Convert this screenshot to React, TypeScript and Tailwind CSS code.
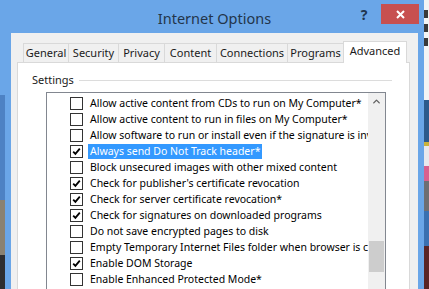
import { ChevronUp } from "lucide-react";

const tabs = [
  { label: "General", w: "w-[45px]" },
  { label: "Security", w: "w-[50px]" },
  { label: "Privacy", w: "w-[46px]" },
  { label: "Content", w: "w-[52px]" },
  { label: "Connections", w: "w-[71px]" },
  { label: "Programs", w: "w-[56px]" },
];

const items: { text: string; checked: boolean; selected?: boolean }[] = [
  { text: "Allow active content from CDs to run on My Computer*", checked: false },
  { text: "Allow active content to run in files on My Computer*", checked: false },
  { text: "Allow software to run or install even if the signature is invalid", checked: false },
  { text: "Always send Do Not Track header*", checked: true, selected: true },
  { text: "Block unsecured images with other mixed content", checked: false },
  { text: "Check for publisher's certificate revocation", checked: true },
  { text: "Check for server certificate revocation*", checked: true },
  { text: "Check for signatures on downloaded programs", checked: true },
  { text: "Do not save encrypted pages to disk", checked: false },
  { text: "Empty Temporary Internet Files folder when browser is closed", checked: false },
  { text: "Enable DOM Storage", checked: true },
  { text: "Enable Enhanced Protected Mode*", checked: false },
];

function CheckBox({ checked }: { checked: boolean }) {
  return (
    <div className="w-[13px] h-[13px] shrink-0 border border-[#333333] bg-white flex items-center justify-center">
      {checked && (
        <svg width="11" height="11" viewBox="0 0 11 11">
          <path d="M2.2 5.6 L4.4 7.9 L8.8 2.6" fill="none" stroke="#000" strokeWidth="1.8" />
        </svg>
      )}
    </div>
  );
}

export default function App() {
  return (
    <div
      className="w-[429px] h-[289px] overflow-hidden flex bg-[#6aa6e8] text-black"
      style={{ fontFamily: '"Noto Sans", "Open Sans", sans-serif' }}
    >
      {/* desktop behind, left */}
      <div className="w-[5px] shrink-0 flex flex-col">
        <div className="h-[95px] bg-[#6aa6e8]" />
        <div className="h-[105px] bg-[#4d82c4]" />
        <div className="h-[55px] bg-[#8a8272]" />
        <div className="flex-1 bg-[#2e2e30]" />
      </div>

      {/* window */}
      <div className="w-[419px] shrink-0 flex flex-col bg-[#6aa6e8]">
        <div className="h-[33px] shrink-0 grid grid-cols-[1fr_auto_1fr]">
          <div />
          <div className="pt-[8px] text-[14.5px] leading-[20px] text-[#23354a]">Internet Options</div>
          <div className="flex justify-end items-start pt-[4px] pr-[5px]">
            <div className="h-[20px] w-[16px] mr-[9px] flex items-center justify-center text-[14px] font-bold text-[#1f3550]">?</div>
            <div className="w-[38px] h-[20px] bg-[#c75050] flex items-center justify-center">
              <svg width="9" height="9" viewBox="0 0 9 9">
                <path d="M1 1 L8 8 M8 1 L1 8" stroke="#fff" strokeWidth="2" />
              </svg>
            </div>
          </div>
        </div>

        <div className="mx-[6px] flex-1 bg-[#f0f0f0] pt-[8px] px-[6px]">
          <div className="h-[21px] flex items-end pl-[6px] text-[11px]">
            {tabs.map((t) => (
              <div
                key={t.label}
                className={`${t.w} h-[19px] shrink-0 border-l border-t border-[#d9d9d9] bg-[#f0f0f0] flex items-center justify-center text-[#1a1a1a]`}
              >
                {t.label}
              </div>
            ))}
            <div className="w-[64px] h-[22px] -mb-px shrink-0 relative z-10 border-x border-t border-[#d9d9d9] bg-white flex items-start justify-center pt-[1px] text-[#1a1a1a]">
              Advanced
            </div>
          </div>

          <div className="w-[393px] h-[240px] border border-[#d9d9d9] bg-white">
            <div className="flex items-center h-[14px] mt-[10px] pl-[14px] pr-[17px]">
              <span className="text-[11px] text-[#1a1a1a]">Settings</span>
              <div className="flex-1 ml-[5px] h-px bg-[#dcdcdc]" />
            </div>

            <div className="ml-[28px] mt-[5px] w-[340px] h-[220px] border border-[#828790] flex">
              <div className="flex-1 overflow-hidden pt-[2px] text-[10.5px]">
                {items.map((it) => (
                  <div key={it.text} className="h-[16px] flex items-center pl-[23px] whitespace-nowrap">
                    <CheckBox checked={it.checked} />
                    <span
                      className={`ml-[5px] px-[2px] h-[15px] leading-[15px] ${
                        it.selected ? "bg-[#3399ff] text-white" : "text-black"
                      }`}
                    >
                      {it.text}
                    </span>
                  </div>
                ))}
              </div>
              <div className="w-[17px] shrink-0 bg-[#f0f0f0] flex flex-col items-center">
                <div className="h-[17px] flex items-center justify-center text-[#606060]">
                  <ChevronUp size={11} strokeWidth={3} />
                </div>
                <div className="mt-[131px] w-[15px] h-[31px] bg-[#cdcdcd]" />
              </div>
            </div>
          </div>
        </div>
      </div>

      {/* desktop behind, right */}
      <div className="w-[5px] shrink-0 flex flex-col">
        <div className="h-[100px] bg-[#f4f4f4] flex flex-col gap-[6px] pt-[10px]">
          <div className="h-[8px] w-[4px] bg-[#3a3a3a]" />
          <div className="h-[8px] w-[4px] bg-[#3a3a3a]" />
          <div className="h-[8px] w-[4px] bg-[#3a3a3a]" />
        </div>
        <div className="h-[42px] bg-[#2c5a8c]" />
        <div className="h-[4px] bg-[#c9b23c]" />
        <div className="h-[20px] bg-[#e8e8ec]" />
        <div className="h-[15px] bg-[#d8608e]" />
        <div className="h-[30px] bg-[#6e6e72]" />
        <div className="h-[35px] bg-[#3a70b0]" />
        <div className="flex-1 bg-[#5a2424]" />
      </div>
    </div>
  );
}
